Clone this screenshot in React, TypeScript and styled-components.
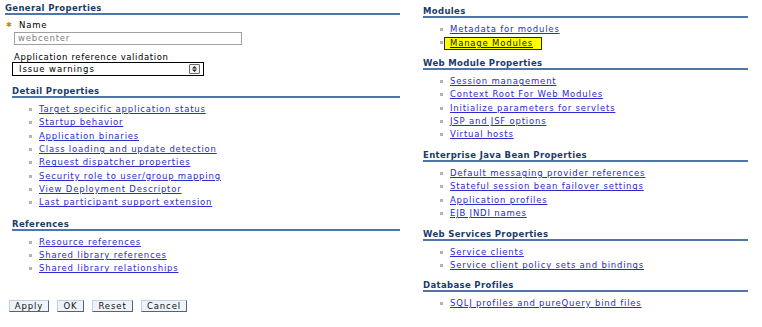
import React from 'react';
import styled, { createGlobalStyle } from 'styled-components';

const Global = createGlobalStyle`
  html, body { margin: 0; padding: 0; background: #fff; }
  body {
    font-family: "DejaVu Sans", Verdana, sans-serif;
    font-size: 8.5px;
    color: #000;
  }
`;

const Page = styled.div`
  display: grid;
  grid-template-columns: 395px 325px;
  column-gap: 23px;
  padding-left: 5px;
  width: 762px;
  height: 327px;
  box-sizing: border-box;
  overflow: hidden;
`;

const Column = styled.div<{ $top: number }>`
  padding-top: ${p => p.$top}px;
  display: flex;
  flex-direction: column;
  align-items: stretch;
`;

const Inner = styled.div`
  padding-left: 7px;
  display: flex;
  flex-direction: column;
  align-items: flex-start;
`;

const SectionBox = styled.div<{ $mt: number }>`
  margin-top: ${p => p.$mt}px;
  align-self: stretch;
`;

const Heading = styled.div`
  font-weight: bold;
  font-size: 8.5px;
  line-height: 10px;
  letter-spacing: 0.35px;
  color: #1b3a6b;
  border-bottom: 2px solid #4f76a8;
  white-space: nowrap;
`;

const LinkList = styled.ul`
  list-style: none;
  margin: 0;
  padding: 5px 0 0 17px;
`;

const Item = styled.li`
  height: 13.33px;
  display: flex;
  align-items: center;
  white-space: nowrap;
`;

const Bullet = styled.span`
  width: 3px;
  height: 3px;
  background: #b4b4b4;
  margin-right: 7px;
  flex: none;
`;

const Link = styled.a<{ $hl?: boolean }>`
  color: #2b2bd2;
  text-decoration: underline;
  letter-spacing: 0.8px;
  line-height: 11px;
  cursor: pointer;
  ${p =>
    p.$hl
      ? `
    background: #ffff00;
    color: #1a1a1a;
    border: 1px solid #2a2a10;
    padding: 0 8px 0 5px;
    margin-left: -6px;
    margin-top: 1px;
  `
      : ''}
`;

const NameRow = styled.div`
  margin-top: 5px;
  margin-left: -6px;
  line-height: 10px;
  display: flex;
  align-items: center;
  letter-spacing: 0.8px;
`;

const Star = styled.span`
  color: #b88d10;
  font-size: 7px;
  width: 13px;
  letter-spacing: 0;
`;

const TextInput = styled.div`
  margin-top: 2px;
  margin-left: 2px;
  width: 228px;
  height: 13px;
  box-sizing: border-box;
  border: 1px solid #a0a0a0;
  color: #808080;
  padding-left: 3px;
  line-height: 11px;
  letter-spacing: 0.8px;
`;

const Label = styled.div`
  margin-top: 7px;
  margin-left: 2px;
  line-height: 10px;
  letter-spacing: 0.6px;
`;

const Select = styled.div`
  width: 192px;
  height: 14px;
  box-sizing: border-box;
  border: 1px solid #000;
  display: flex;
  align-items: center;
  justify-content: space-between;
  padding: 0 3px 0 6px;
  letter-spacing: 0.9px;
`;

const Spinner = styled.span`
  width: 11px;
  height: 10px;
  box-sizing: border-box;
  border: 1px solid #6a6a6a;
  border-radius: 1px;
  display: flex;
  align-items: center;
  justify-content: center;
  background: #f4f4f4;
`;

const ButtonRow = styled.div`
  margin-top: 24px;
  margin-left: -3px;
  display: flex;
  gap: 8px;
`;

const Button = styled.button<{ $w: number }>`
  width: ${p => p.$w}px;
  height: 12px;
  padding: 0;
  font-family: "DejaVu Sans", Verdana, sans-serif;
  font-size: 8.5px;
  letter-spacing: 0.9px;
  line-height: 10px;
  color: #111;
  background: #eef3fa;
  border: 1px solid;
  border-color: #c3cfdf #4d6485 #4d6485 #c3cfdf;
  box-sizing: border-box;
`;

type SectionProps = { title: string; links: string[]; mt: number; hl?: string };

const Section = ({ title, links, mt, hl }: SectionProps) => (
  <SectionBox $mt={mt}>
    <Heading>{title}</Heading>
    <LinkList>
      {links.map(l => (
        <Item key={l}>
          <Bullet />
          <Link $hl={l === hl}>{l}</Link>
        </Item>
      ))}
    </LinkList>
  </SectionBox>
);

export default function App() {
  return (
    <>
      <Global />
      <Page>
        <Column $top={3}>
          <Heading>General Properties</Heading>
          <Inner>
            <NameRow>
              <Star>✱</Star>
              Name
            </NameRow>
            <TextInput>webcenter</TextInput>
            <Label>Application reference validation</Label>
            <Select>
              <span>Issue warnings</span>
              <Spinner>
                <svg width="5" height="6" viewBox="0 0 5 6">
                  <path d="M2.5 0 L5 2.4 L0 2.4 Z M2.5 6 L5 3.6 L0 3.6 Z" fill="#222" />
                </svg>
              </Spinner>
            </Select>
            <Section
              mt={10}
              title="Detail Properties"
              links={[
                'Target specific application status',
                'Startup behavior',
                'Application binaries',
                'Class loading and update detection',
                'Request dispatcher properties',
                'Security role to user/group mapping',
                'View Deployment Descriptor',
                'Last participant support extension',
              ]}
            />
            <Section
              mt={9}
              title="References"
              links={['Resource references', 'Shared library references', 'Shared library relationships']}
            />
            <ButtonRow>
              <Button $w={40}>Apply</Button>
              <Button $w={27}>OK</Button>
              <Button $w={41}>Reset</Button>
              <Button $w={46}>Cancel</Button>
            </ButtonRow>
          </Inner>
        </Column>
        <Column $top={0}>
          <Section mt={6} title="Modules" links={['Metadata for modules', 'Manage Modules']} hl="Manage Modules" />
          <Section
            mt={8.3}
            title="Web Module Properties"
            links={[
              'Session management',
              'Context Root For Web Modules',
              'Initialize parameters for servlets',
              'JSP and JSF options',
              'Virtual hosts',
            ]}
          />
          <Section
            mt={8.3}
            title="Enterprise Java Bean Properties"
            links={[
              'Default messaging provider references',
              'Stateful session bean failover settings',
              'Application profiles',
              'EJB JNDI names',
            ]}
          />
          <Section
            mt={8.7}
            title="Web Services Properties"
            links={['Service clients', 'Service client policy sets and bindings']}
          />
          <Section mt={7.3} title="Database Profiles" links={['SQLJ profiles and pureQuery bind files']} />
        </Column>
      </Page>
    </>
  );
}
